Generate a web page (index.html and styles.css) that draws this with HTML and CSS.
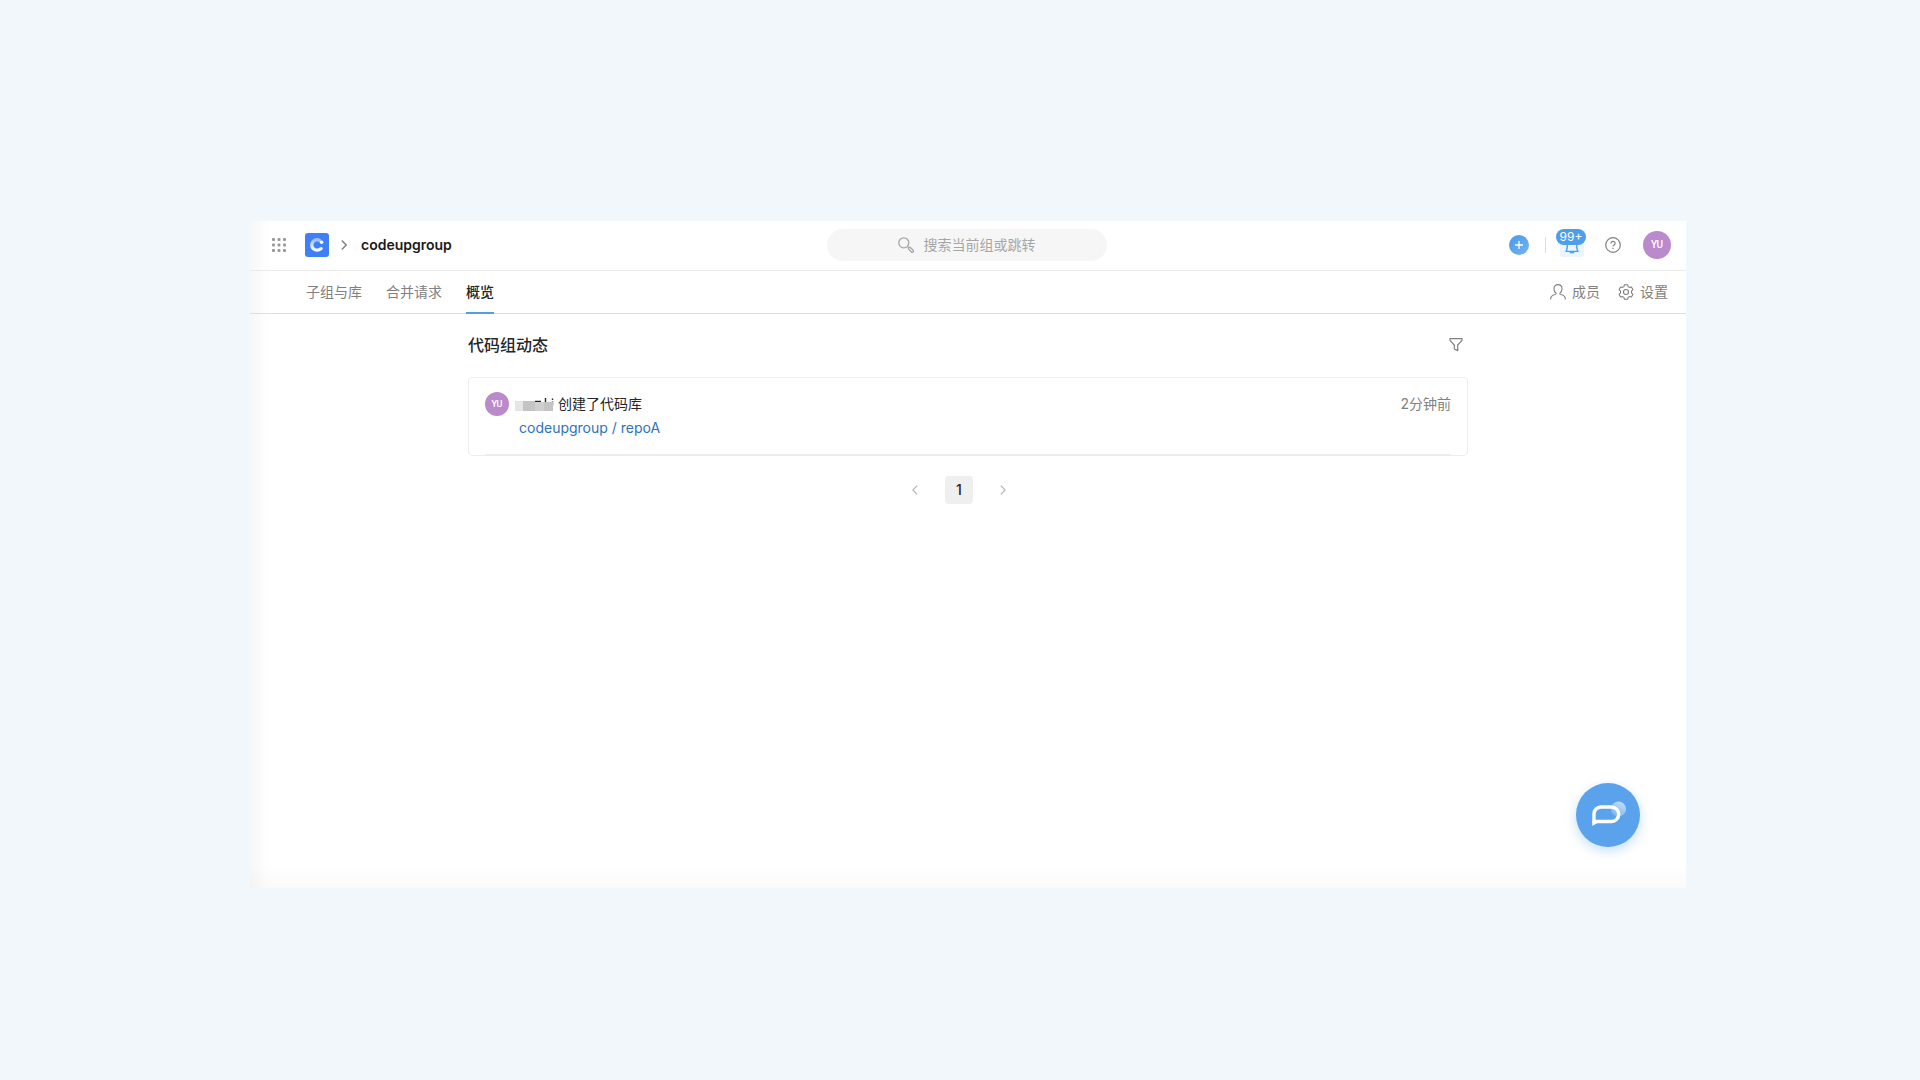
FILE: index.html
```html
<!DOCTYPE html>
<html lang="zh-CN">
<head>
  <meta charset="UTF-8">
  <meta name="viewport" content="width=device-width, initial-scale=1.0">
  <title>codeupgroup</title>
  <link rel="stylesheet" href="styles.css">
</head>
<body>
  <div class="panel">
    <header class="topbar">
      <div class="brand">
        <button class="icon-btn" type="button" aria-label="应用">
          <svg width="14" height="14" viewBox="0 0 14 14" fill="#999">
            <rect x="0" y="0" width="3" height="3" rx="1"/><rect x="5.5" y="0" width="3" height="3" rx="1"/><rect x="11" y="0" width="3" height="3" rx="1"/>
            <rect x="0" y="5.5" width="3" height="3" rx="1"/><rect x="5.5" y="5.5" width="3" height="3" rx="1"/><rect x="11" y="5.5" width="3" height="3" rx="1"/>
            <rect x="0" y="11" width="3" height="3" rx="1"/><rect x="5.5" y="11" width="3" height="3" rx="1"/><rect x="11" y="11" width="3" height="3" rx="1"/>
          </svg>
        </button>
        <a class="logo" href="#" aria-label="Codeup">
          <svg width="24" height="24" viewBox="0 0 24 24" fill="none">
            <defs>
              <linearGradient id="logoFade" x1="0" y1="0" x2="0" y2="1">
                <stop offset="0" stop-color="#fff" stop-opacity=".5"/>
                <stop offset="1" stop-color="#fff"/>
              </linearGradient>
            </defs>
            <rect width="24" height="24" rx="3" fill="#3f80f7"/>
            <path d="M14.5 7.2C10.5 5.6 6.8 8.2 6.8 12c0 4.2 5 7 9.4 3.6" stroke="url(#logoFade)" stroke-width="3.2" stroke-linecap="round"/>
            <circle cx="16.6" cy="9.2" r="1.8" fill="#fff"/>
          </svg>
        </a>
        <svg class="crumb" width="6" height="10" viewBox="0 0 6 10" fill="none" stroke="#808080" stroke-width="1.4"><path d="M.8.6 5.2 5 .8 9.4"/></svg>
        <h1 class="group-name">codeupgroup</h1>
      </div>

      <label class="search">
        <svg width="16" height="16" viewBox="0 0 16 16" fill="none" stroke="#a6a6a6" stroke-width="1.3">
          <circle cx="5.8" cy="5.8" r="5"/>
          <path d="m9.4 9.4 1.6 1.6"/>
          <rect x="10" y="11.6" width="6" height="2.4" rx="1.2" transform="rotate(45 13 12.8)"/>
        </svg>
        <input type="text" placeholder="搜索当前组或跳转" aria-label="搜索">
      </label>

      <div class="actions">
        <button class="icon-btn" type="button" aria-label="新建">
          <svg width="20" height="20" viewBox="0 0 20 20">
            <defs>
              <linearGradient id="addFill" x1="0" y1="0" x2="1" y2="1">
                <stop offset="0" stop-color="#479ae8"/>
                <stop offset="1" stop-color="#74b4f2"/>
              </linearGradient>
            </defs>
            <circle cx="10" cy="10" r="10" fill="url(#addFill)"/>
            <path d="M10 6v8M6 10h8" stroke="#fff" stroke-width="1.3"/>
          </svg>
        </button>
        <span class="divider"></span>
        <button class="bell" type="button" aria-label="通知">
          <svg width="24" height="24" viewBox="0 0 24 24" fill="none" stroke="#4d9eeb" stroke-width="1.4">
            <path d="M7.2 9v6l-1 3.400h11.600l-1-3.400V9M10.400 18.400v1.200h3.200v-1.200"/>
          </svg>
          <span class="badge">99+</span>
        </button>
        <button class="icon-btn" type="button" aria-label="帮助">
          <svg width="16" height="16" viewBox="0 0 16 16" fill="none" stroke="#808080" stroke-width="1.2">
            <circle cx="8" cy="8" r="7.3"/>
            <path d="M5.9 6.4a2.1 2.1 0 1 1 3 1.9c-.6.3-.9.6-.9 1.3"/>
            <path d="M8 10.7v1.3"/>
          </svg>
        </button>
        <button class="avatar avatar-lg" type="button">YU</button>
      </div>
    </header>

    <nav class="tabs">
      <div class="tabs-left">
        <a class="tab" href="#">子组与库</a>
        <a class="tab" href="#">合并请求</a>
        <a class="tab active" href="#">概览</a>
      </div>
      <div class="tabs-right">
        <a class="tool" href="#">
          <svg width="16" height="16" viewBox="0 0 16 16" fill="none" stroke="#808080" stroke-width="1.1">
            <path d="M.6 15.4c0-3 1.6-4 3.6-4.6 1.5-.4 2.1-.8 2-1.5C4.6 8.3 4 6.6 4 4.7 4 2.2 5.7.6 8 .6s4 1.6 4 4.1c0 1.9-.6 3.6-2.2 4.6-.1.7.5 1.1 2 1.5 2 .6 3.6 1.6 3.6 4.6"/>
          </svg>
          <span>成员</span>
        </a>
        <a class="tool" href="#">
          <svg width="16" height="16" viewBox="0 0 16 16" fill="none" stroke="#808080" stroke-width="1.1" stroke-linejoin="round">
            <path d="M6.5.7h3l.6 1.9 1.3.8 2-.4 1.5 2.6-1.4 1.5v1.8l1.4 1.5-1.5 2.6-2-.4-1.3.8-.6 1.9h-3l-.6-1.9-1.3-.8-2 .4-1.5-2.600 1.400-1.500V7.100L1.100 5.600 2.600 3l2 .4 1.300-.8z"/>
            <circle cx="8" cy="8" r="2.5"/>
          </svg>
          <span>设置</span>
        </a>
      </div>
    </nav>

    <main class="content">
      <div class="content-head">
        <h2>代码组动态</h2>
        <button class="icon-btn" type="button" aria-label="筛选">
          <svg width="14" height="14" viewBox="0 0 14 14" fill="none" stroke="#808080" stroke-width="1.2" stroke-linejoin="round">
            <path d="M1 .6h12v1.8L8.7 7v5.6L5.3 11V7L1 2.4z"/>
          </svg>
        </button>
      </div>

      <section class="card">
        <article class="event">
          <span class="avatar avatar-sm">YU</span>
          <div class="event-body">
            <p class="event-title">
              <svg class="masked-name" width="39" height="16" viewBox="0 0 39 16">
                <path d="M20 5.5h6M30.5 2v5M37.5 2.5v1.5M37.5 5.5v4" stroke="#262626" stroke-width="1.4"/>
                <rect x="0" y="5" width="8" height="10" fill="#e6e6e6"/>
                <rect x="8" y="5" width="12" height="10" fill="#c4c4c4"/>
                <rect x="20" y="6" width="9" height="9" fill="#cfcfcf"/>
                <rect x="29" y="6" width="9" height="9" fill="#c4c4c4"/>
              </svg>
              <span>创建了代码库</span>
            </p>
            <a class="event-link" href="#">codeupgroup / repoA</a>
          </div>
          <time class="event-time">2分钟前</time>
        </article>
      </section>

      <nav class="pager" aria-label="分页">
        <button class="page-btn" type="button" aria-label="上一页">
          <svg width="6" height="10" viewBox="0 0 6 10" fill="none" stroke="#b8b8b8" stroke-width="1.3"><path d="M5.2.6.8 5l4.4 4.4"/></svg>
        </button>
        <button class="page-btn current" type="button">1</button>
        <button class="page-btn" type="button" aria-label="下一页">
          <svg width="6" height="10" viewBox="0 0 6 10" fill="none" stroke="#b8b8b8" stroke-width="1.3"><path d="M.8.6 5.2 5 .8 9.4"/></svg>
        </button>
      </nav>
    </main>

    <button class="chat" type="button" aria-label="联系我们">
      <svg width="36" height="36" viewBox="0 0 36 36" fill="none">
        <defs>
          <linearGradient id="chatDot" x1=".8" y1="0" x2=".3" y2="1">
            <stop offset="0" stop-color="#c4dffa"/>
            <stop offset="1" stop-color="#7ab6f2"/>
          </linearGradient>
        </defs>
        <circle cx="28.5" cy="12" r="7.5" fill="url(#chatDot)"/>
        <path d="M4 24.5V17a7 7 0 0 1 7-7h10.5a7.25 7.25 0 0 1 0 14.5z" stroke="#fff" stroke-width="3.4"/>
        <path d="M2.3 24v5l5-3z" fill="#fff"/>
      </svg>
    </button>
  </div>
</body>
</html>
```
FILE: styles.css
```css
* {
  margin: 0;
  padding: 0;
  box-sizing: border-box;
}

body {
  display: flex;
  min-height: 100vh;
  padding: 221px 234px 192px 250px;
  background: #f1f7fb;
  font-family: Inter, 'Noto Sans CJK SC', sans-serif;
  font-size: 14px;
  line-height: 24px;
  color: #262626;
}

a {
  color: inherit;
  text-decoration: none;
}

button {
  border: none;
  background: none;
  font: inherit;
  color: inherit;
  cursor: pointer;
}

svg {
  display: block;
}

.panel {
  position: relative;
  flex: 1;
  background:
    linear-gradient(to right, rgba(0, 0, 0, 0.03), transparent 20px),
    linear-gradient(to top, rgba(0, 0, 0, 0.02), transparent 24px),
    #fff;
}

/* Top bar */
.topbar {
  display: grid;
  grid-template-columns: 1fr auto 1fr;
  align-items: center;
  height: 50px;
  padding: 0 15px 2px 12px;
  border-bottom: 1px solid #ebebeb;
}

.brand {
  display: flex;
  align-items: center;
  padding-left: 10px;
}

.logo {
  margin-left: 19px;
}

.crumb {
  margin: 0 14px 0 12px;
}

.group-name {
  font-size: 14px;
  font-weight: 600;
  color: #1a1a1a;
}

.search {
  display: flex;
  align-items: center;
  justify-content: center;
  gap: 10px;
  width: 280px;
  height: 32px;
  border-radius: 16px;
  background: #f6f6f6;
}

.search input {
  width: 112px;
  border: none;
  outline: none;
  background: none;
  font: inherit;
}

.search input::placeholder {
  color: #a6a6a6;
  opacity: 1;
}

.actions {
  display: flex;
  align-items: center;
  justify-content: flex-end;
}

.divider {
  width: 1px;
  height: 16px;
  margin: 0 14px 0 16px;
  background: #dedede;
}

.bell {
  position: relative;
  margin-right: 21px;
  border-radius: 3px;
  background: #ebf5ff;
}

.badge {
  position: absolute;
  top: -4px;
  left: -4px;
  width: 30px;
  border-radius: 8px;
  background: #4d9eeb;
  font-size: 12px;
  line-height: 16px;
  text-align: center;
  color: #fff;
}

.avatar {
  display: flex;
  flex: none;
  align-items: center;
  justify-content: center;
  border-radius: 50%;
  background: #bb8acc;
  font-family: Roboto, sans-serif;
  font-weight: 500;
  color: #fff;
}

.avatar-lg {
  width: 28px;
  height: 28px;
  margin-left: 22px;
  font-size: 10px;
}

.avatar-sm {
  width: 24px;
  height: 24px;
  font-size: 9px;
}

/* Tabs */
.tabs {
  display: flex;
  justify-content: space-between;
  height: 43px;
  padding: 0 18px 0 56px;
  border-bottom: 1px solid #dedede;
  color: #808080;
}

.tabs-left,
.tabs-right {
  display: flex;
  gap: 24px;
}

.tabs-right {
  gap: 18px;
}

.tab {
  height: 43px;
  line-height: 42px;
}

.tab.active {
  border-bottom: 2px solid #4d9eeb;
  font-weight: 500;
  color: #262626;
}

.tool {
  display: flex;
  align-items: center;
  gap: 6px;
}

/* Content */
.content {
  max-width: 1000px;
  margin: 0 auto;
  padding-top: 19px;
}

.content-head {
  display: flex;
  align-items: center;
  justify-content: space-between;
  padding-right: 5px;
}

.content-head h2 {
  font-size: 16px;
  font-weight: 500;
}

.card {
  margin-top: 20px;
  padding: 0 16px;
  border: 1px solid #ededed;
  border-radius: 4px;
}

.event {
  display: flex;
  align-items: flex-start;
  padding: 14px 0;
  border-bottom: 1px solid #ededed;
}

.event-body {
  flex: 1;
  margin-left: 6px;
}

.event-title {
  display: flex;
  align-items: center;
  gap: 4px;
}

.event-link {
  margin-left: 4px;
  color: #2d73bd;
}

.event-time {
  color: #808080;
}

.pager {
  display: flex;
  justify-content: center;
  gap: 16px;
  margin-top: 20px;
  padding-right: 18px;
}

.page-btn {
  display: flex;
  align-items: center;
  justify-content: center;
  width: 28px;
  height: 28px;
  border-radius: 4px;
}

.page-btn.current {
  background: #efefef;
  font-weight: 500;
}

/* Floating chat button */
.chat {
  position: absolute;
  right: 46px;
  bottom: 41px;
  display: flex;
  align-items: center;
  justify-content: center;
  width: 64px;
  height: 64px;
  border-radius: 50%;
  background: #5aa3ec;
  box-shadow: 0 4px 12px rgba(90, 163, 236, 0.35);
}
```
